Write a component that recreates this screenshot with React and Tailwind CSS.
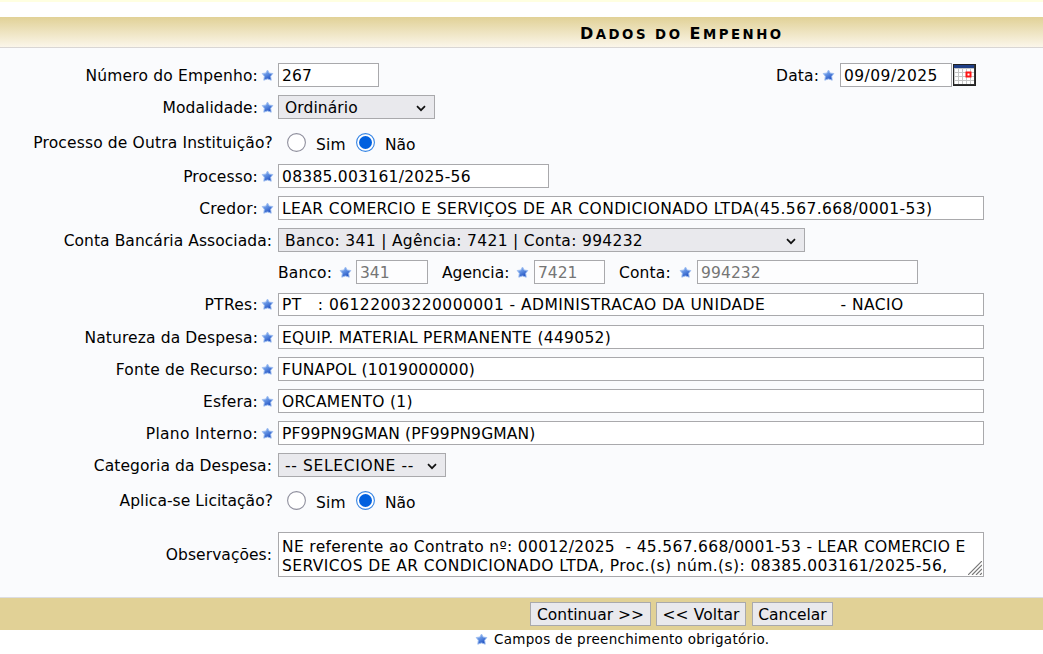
import React from "react";

function Star() {
  return (
    <svg className="h-[13px] w-[13px] shrink-0" viewBox="0 0 13 13">
      <defs>
        <linearGradient id="starFill" x1="0" y1="0" x2="0.6" y2="1">
          <stop offset="0" stopColor="#a9c8f6" />
          <stop offset="0.5" stopColor="#5f8fe2" />
          <stop offset="1" stopColor="#1f4fc0" />
        </linearGradient>
      </defs>
      <path
        d="M6.5 1 8.2 4.1 11.8 4.5 9.7 7.3 10.2 11.2 6.5 9.9 2.8 11.2 3.3 7.3 1.2 4.5 4.8 4.1Z"
        fill="url(#starFill)"
        stroke="#9dbdf0"
        strokeWidth="0.9"
        strokeLinejoin="round"
      />
    </svg>
  );
}

function Row({ label, tracking = "", required, height = "h-8", shift = "pr-px", children }) {
  return (
    <div className={`flex shrink-0 items-center ${height}`}>
      <div className={`flex w-[274px] shrink-0 items-center justify-end ${required ? "" : shift}`}>
        <span className={`whitespace-pre pt-[2px] ${tracking}`}>{label}</span>
        {required && (
          <span className="ml-[3px] flex">
            <Star />
          </span>
        )}
      </div>
      {children}
    </div>
  );
}

function Field({ width, value, tracking = "", height = "h-6", tone = "bg-white text-black", margin = "ml-1" }) {
  return (
    <div className={`flex shrink-0 items-center overflow-hidden border border-[#a9a9ac] pl-[3px] ${margin} ${height} ${width} ${tone}`}>
      <span className={`whitespace-pre pt-[2px] ${tracking}`}>{value}</span>
    </div>
  );
}

function Select({ width, value, tracking = "" }) {
  return (
    <div className={`ml-1 flex h-6 shrink-0 items-center justify-between border border-[#a9a9ac] bg-[#e9e9ed] pl-[6px] pr-[8px] ${width}`}>
      <span className={`whitespace-pre pt-[2px] ${tracking}`}>{value}</span>
      <svg className="mt-[2px] h-[7px] w-[10px]" viewBox="0 0 10 7" fill="none">
        <path d="M1 1.2 5 5.2 9 1.2" stroke="#111" strokeWidth="1.7" />
      </svg>
    </div>
  );
}

function Radio({ checked }) {
  return (
    <svg className="h-[19px] w-[19px] shrink-0" viewBox="0 0 19 19">
      <circle cx="9.5" cy="9.5" r="8.9" fill="#fff" stroke={checked ? "#3584e4" : "#8f8f9d"} strokeWidth="1.1" />
      {checked && <circle cx="9.5" cy="9.5" r="6.5" fill="#0060df" />}
    </svg>
  );
}

function YesNo() {
  return (
    <div className="ml-[13px] flex items-center">
      <Radio />
      <span className="ml-[10px] mt-[5px] w-[40px] tracking-[0.2px]">Sim</span>
      <Radio checked />
      <span className="ml-[10px] mt-[5px]">Não</span>
    </div>
  );
}

function Calendar() {
  return (
    <svg className="ml-px h-[22px] w-[23px]" viewBox="0 0 23 22">
      <rect x="0.5" y="0.5" width="22" height="21" fill="#c6c6c6" stroke="#222" />
      <rect x="1" y="1" width="21" height="3" fill="#1f3f86" />
      {[5, 9, 13, 17].map((y) =>
        [2, 6, 10, 14, 18].map((x) => <rect key={`${x}-${y}`} x={x} y={y} width="3" height="3" fill="#fff" />)
      )}
      <rect x="13.5" y="8.5" width="4" height="4" fill="#fff" stroke="#ff1414" strokeWidth="2" />
      <path d="M1 20.5H22M21.5 1V21" stroke="#333" />
    </svg>
  );
}

function Button({ width, tracking = "", children }) {
  return (
    <button className={`flex h-6 items-center justify-center whitespace-nowrap border border-[#a9a9ac] bg-[#e9e9ed] pt-[2px] ${width} ${tracking}`}>
      {children}
    </button>
  );
}

export default function App() {
  return (
    <div className="flex h-[654px] w-[1043px] flex-col overflow-hidden bg-white font-['DejaVu_Sans',sans-serif] text-[15.5px] leading-[19px] text-black">
      <div className="h-[2px] shrink-0 bg-[#ffffe1]" />
      <div className="mt-[15px] flex h-[31px] shrink-0 items-center border-b border-[#d9d6d4] bg-linear-to-b from-[#e1d196] to-[#fbf6ea] pl-[580px] pt-[3px]">
        <h1 className="whitespace-nowrap font-bold tracking-[2.5px] text-[16px]">
          D<span className="text-[13.3px]">ADOS DO </span>E<span className="text-[13.3px]">MPENHO</span>
        </h1>
      </div>

      <main className="flex h-[550px] shrink-0 flex-col border-b border-[#dcdde2] bg-[#fafbfd] pt-[11px]">
        <Row label="Número do Empenho:" tracking="tracking-[0.18px]" required>
          <Field width="w-[101px]" value="267" tracking="tracking-[0.2px]" />
          <span className="ml-[397px] w-[46px] pt-[2px] tracking-[0.2px]">Data:</span>
          <span className="flex"><Star /></span>
          <Field width="w-[112px]" margin="ml-[5px]" value="09/09/2025" tracking="tracking-[0.45px]" />
          <Calendar />
        </Row>
        <Row label="Modalidade:" tracking="tracking-[0.06px]" required>
          <Select width="w-[157px]" value="Ordinário" tracking="tracking-[0.1px]" />
        </Row>
        <Row label="Processo de Outra Instituição?" tracking="tracking-[0.15px]" height="h-[39px]">
          <YesNo />
        </Row>
        <div className="-mt-[2px] flex flex-col">
          <Row label="Processo:" tracking="tracking-[0.15px]" required>
            <Field width="w-[271px]" value="08385.003161/2025-56" tracking="tracking-[0.27px]" />
          </Row>
          <Row label="Credor:" tracking="tracking-[0.25px]" required>
            <Field width="w-[706px]" value="LEAR COMERCIO E SERVIÇOS DE AR CONDICIONADO LTDA(45.567.668/0001-53)" tracking="tracking-[0.41px]" />
          </Row>
          <Row label="Conta Bancária Associada:" tracking="tracking-[0.06px]" shift="pr-[2px]">
            <Select width="w-[527px]" value="Banco: 341 | Agência: 7421 | Conta: 994232" tracking="tracking-[0.32px]" />
          </Row>
          <Row label="">
            <span className="ml-1 w-[61px] pt-[2px] tracking-[0.15px]">Banco:</span>
            <span className="flex"><Star /></span>
            <Field width="w-[72px]" margin="ml-[4px]" value="341" tone="bg-[#fdfdfe] text-[#757575]" />
            <span className="ml-[14px] w-[74px] pt-[2px]">Agencia:</span>
            <span className="flex"><Star /></span>
            <Field width="w-[71px]" margin="ml-[5px]" value="7421" tone="bg-[#fdfdfe] text-[#757575]" />
            <span className="ml-[14px] w-[60px] pt-[2px] tracking-[0.15px]">Conta:</span>
            <span className="flex"><Star /></span>
            <Field width="w-[221px]" margin="ml-[5px]" value="994232" tracking="tracking-[0.1px]" tone="bg-[#fdfdfe] text-[#757575]" />
          </Row>
          <Row label="PTRes:" tracking="tracking-[0.3px]" required height="h-[33px]">
            <Field width="w-[706px]" height="h-[23px]" value="PT   : 06122003220000001 - ADMINISTRACAO DA UNIDADE              - NACIO" tracking="tracking-[0.45px]" />
          </Row>
          <Row label="Natureza da Despesa:" tracking="tracking-[0.12px]" required>
            <Field width="w-[706px]" value="EQUIP. MATERIAL PERMANENTE (449052)" tracking="tracking-[0.3px]" />
          </Row>
          <Row label="Fonte de Recurso:" tracking="tracking-[0.15px]" required>
            <Field width="w-[706px]" value="FUNAPOL (1019000000)" tracking="tracking-[0.24px]" />
          </Row>
          <Row label="Esfera:" tracking="tracking-[0.15px]" required>
            <Field width="w-[706px]" value="ORCAMENTO (1)" tracking="tracking-[0.3px]" />
          </Row>
          <Row label="Plano Interno:" tracking="tracking-[0.3px]" required>
            <Field width="w-[706px]" value="PF99PN9GMAN (PF99PN9GMAN)" tracking="tracking-[0.15px]" />
          </Row>
          <Row label="Categoria da Despesa:" tracking="tracking-[0.09px]" shift="pr-[2px]">
            <Select width="w-[168px]" value="-- SELECIONE --" tracking="tracking-[0.65px]" />
          </Row>
          <Row label="Aplica-se Licitação?" tracking="tracking-[0.06px]" height="h-[39px]">
            <YesNo />
          </Row>
          <Row label="Observações:" tracking="tracking-[0.05px]" shift="pr-[2px]" height="h-[69px]">
            <div className="relative ml-1 h-[45px] w-[706px] whitespace-pre border border-[#a9a9ac] bg-white pl-[3px] pt-[5px]">
              <div className="tracking-[0.32px]">NE referente ao Contrato nº: 00012/2025  - 45.567.668/0001-53 - LEAR COMERCIO E</div>
              <div className="tracking-[0.42px]">SERVICOS DE AR CONDICIONADO LTDA, Proc.(s) núm.(s): 08385.003161/2025-56,</div>
              <svg className="absolute bottom-[1px] right-[1px] h-[14px] w-[14px]" viewBox="0 0 14 14">
                <path d="M0 14 14 0M4 14 14 4M8 14 14 8M12 14 14 12" stroke="#777" strokeWidth="1.2" />
              </svg>
            </div>
          </Row>
        </div>
      </main>

      <div className="flex h-8 shrink-0 items-center gap-[5px] bg-[#e1d196] pl-[530px]">
        <Button width="w-[121px]">Continuar &gt;&gt;</Button>
        <Button width="w-[90px]" tracking="tracking-[0.1px]">&lt;&lt; Voltar</Button>
        <Button width="ml-px w-[81px]">Cancelar</Button>
      </div>
      <div className="flex h-[19px] shrink-0 items-center pl-[475px] text-[13.5px]">
        <Star />
        <span className="ml-[6px] whitespace-nowrap tracking-[0.29px]">Campos de preenchimento obrigatório.</span>
      </div>
    </div>
  );
}
